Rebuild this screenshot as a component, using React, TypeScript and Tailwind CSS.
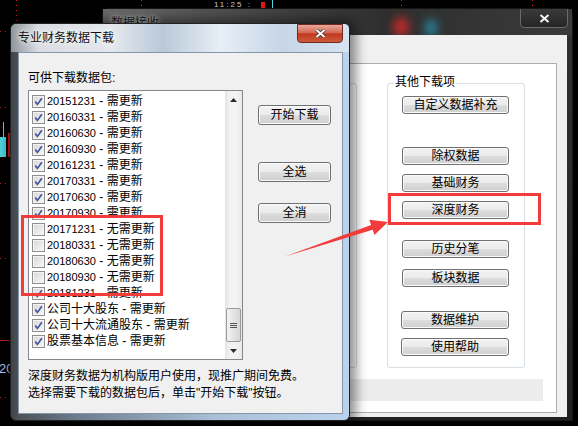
import React from "react";

type Row = { d: string; s: string; on: boolean };

const rows: Row[] = [
  { d: "20151231", s: "需更新", on: true },
  { d: "20160331", s: "需更新", on: true },
  { d: "20160630", s: "需更新", on: true },
  { d: "20160930", s: "需更新", on: true },
  { d: "20161231", s: "需更新", on: true },
  { d: "20170331", s: "需更新", on: true },
  { d: "20170630", s: "需更新", on: true },
  { d: "20170930", s: "需更新", on: true },
  { d: "20171231", s: "无需更新", on: false },
  { d: "20180331", s: "无需更新", on: false },
  { d: "20180630", s: "无需更新", on: false },
  { d: "20180930", s: "无需更新", on: false },
  { d: "20181231", s: "需更新", on: true },
  { d: "公司十大股东", s: "需更新", on: true },
  { d: "公司十大流通股东", s: "需更新", on: true },
  { d: "股票基本信息", s: "需更新", on: true },
];

const Check = ({ on }: { on: boolean }) => (
  <span className="w-[13px] h-[13px] shrink-0 border border-[#8f8f8f] bg-[linear-gradient(135deg,#d8d8d8,#f8f8f8)] shadow-[inset_0_0_0_1px_#f4f4f4] flex items-center justify-center">
    {on && (
      <svg width="9" height="9" viewBox="0 0 9 9">
        <path d="M1.2 4.6 L3.4 7.4 L7.9 1.2" fill="none" stroke="#3f58a8" strokeWidth="1.7" />
      </svg>
    )}
  </span>
);

const Btn = ({ label, className }: { label: string; className: string }) => (
  <div
    className={`rounded-[3px] border border-[#707070] bg-[linear-gradient(#f2f2f2_0%,#ebebeb_50%,#dddddd_50%,#cfcfcf_100%)] shadow-[inset_0_0_0_1px_#fafafa] flex items-center justify-center text-[12px] leading-[16px] text-black ${className}`}
  >
    {label}
  </div>
);

const CloseX = ({ color }: { color: string }) => (
  <svg width="11" height="9" viewBox="0 0 11 9">
    <path d="M1.5 1 L9.5 8 M9.5 1 L1.5 8" stroke="#333" strokeWidth="3.4" />
    <path d="M1.5 1 L9.5 8 M9.5 1 L1.5 8" stroke={color} strokeWidth="2" />
  </svg>
);

export default function App() {
  return (
    <div className="relative w-[578px] h-[426px] overflow-hidden bg-black font-['Liberation_Sans','Noto_Sans_CJK_SC',sans-serif] text-black">
      {/* chart behind the windows */}
      <svg className="absolute left-0 top-0" width="578" height="426">
        <g stroke="#d42020" strokeWidth="1" strokeDasharray="1 4">
          <line x1="16.5" y1="0" x2="16.5" y2="24" />
          <line x1="141.5" y1="0" x2="141.5" y2="10" />
          <line x1="401.5" y1="0" x2="401.5" y2="8" />
          <line x1="532.5" y1="0" x2="532.5" y2="8" />
          <line x1="0" y1="31.5" x2="12" y2="31.5" />
          <line x1="0" y1="107.5" x2="12" y2="107.5" />
          <line x1="0" y1="183.5" x2="12" y2="183.5" />
          <line x1="0" y1="258.5" x2="12" y2="258.5" />
          <line x1="0" y1="397.5" x2="12" y2="397.5" />
        </g>
        <line x1="0" y1="340.5" x2="12" y2="340.5" stroke="#c02020" />
        <line x1="3.5" y1="122" x2="3.5" y2="137" stroke="#4fd8e0" />
        <rect x="0" y="137" width="6" height="20" fill="#4fd8e0" />
        <rect x="8" y="133" width="2" height="24" fill="#c81818" />
        <rect x="261" y="2" width="4" height="6" fill="#e01818" />
        <line x1="272.5" y1="0" x2="272.5" y2="8" stroke="#4fd8e0" />
      </svg>
      <div className="absolute left-[214px] top-[1px] text-[8px] leading-[7px] text-[#c8c8c8] tracking-[2px]">11:25 :</div>
      <div className="absolute left-[-1px] top-[361px] text-[13px] leading-[16px] text-[#b8c8ff]">20</div>

      {/* back window: 数据接收 */}
      <div className="absolute left-[102px] top-[8px] w-[471px] h-[413px] rounded-t-[7px] border border-[#161616] bg-[linear-gradient(#555555,#303030_7%,#202020)] shadow-[inset_0_1px_0_#8a8a8a]">
        <div className="relative h-[26px] pl-[8px] pt-[1px] overflow-hidden bg-[linear-gradient(to_right,#6a6a6a,#4a4a4a_30%,#2e2e2e_60%,#3a3a3a)]">
          <span className="absolute left-[290px] top-[8px] w-[16px] h-[20px] rounded-full bg-[#b82a2a] blur-[5px]" />
          <span className="absolute left-[322px] top-[10px] w-[12px] h-[18px] rounded-full bg-[#2a7f95] blur-[5px]" />
          <span className="relative text-[12px] leading-[16px] text-[#1a1a1a] [text-shadow:0_0_6px_#d0d0d0,0_0_3px_#bcbcbc]">数据接收</span>
          <div className="absolute right-[4px] top-[-1px] w-[48px] h-[20px] rounded-b-[4px] border border-[#6a6a6a] bg-[linear-gradient(#3a3a3a,#262626)] flex items-center justify-center">
            <CloseX color="#f4f4f4" />
          </div>
        </div>
        <div className="ml-[6px] mr-[5px] h-[382px] bg-[#f0f0f0] pt-[28px] pl-[6px] pr-[10px]">
          <div className="h-[350px] border border-[#adadad] bg-white">
            <div className="flex gap-[30px] ml-[9px] mt-[19px]">
              <div className="w-[232px] h-[285px] rounded-[3px] border border-[#d5dfe5]" />
              <div className="relative w-[138px] h-[285px] rounded-[3px] border border-[#d5dfe5] flex flex-col pl-[14px] pt-[12px]">
                <span className="absolute left-[6px] top-[-10px] px-[1px] bg-white text-[12px] leading-[16px]">其他下载项</span>
                <Btn label="自定义数据补充" className="w-[107px] h-[18px]" />
                <Btn label="除权数据" className="w-[107px] h-[18px] mt-[33px]" />
                <Btn label="基础财务" className="w-[107px] h-[18px] mt-[9px]" />
                <Btn label="深度财务" className="w-[107px] h-[18px] mt-[9px]" />
                <Btn label="历史分笔" className="w-[107px] h-[18px] mt-[21px]" />
                <Btn label="板块数据" className="w-[107px] h-[18px] mt-[11px]" />
                <Btn label="数据维护" className="w-[108px] h-[18px] mt-[24px] ml-[-1px]" />
                <Btn label="使用帮助" className="w-[108px] h-[18px] mt-[9px] ml-[-1px]" />
              </div>
            </div>
            <div className="mt-[11px] mr-[13px] h-[22px] bg-[#ececec]" />
          </div>
        </div>
      </div>

      {/* front dialog: 专业财务数据下载 */}
      <div className="absolute left-[10px] top-[23px] w-[340px] h-[398px] rounded-[6px] border border-[#222] bg-[linear-gradient(to_right,#3e4247_0px,#4c5258_8px,#6d7d8e_20%,#a9bfd6_60%,#bad3ed_100%)] shadow-[2px_0_12px_4px_rgba(0,0,0,0.45)] flex flex-col">
        <div className="relative h-[28px] rounded-t-[5px] bg-[linear-gradient(to_right,#8e949b,#d9dde2_8%,#e4e8ec_30%,#b9c9d9_45%,#e8eef5_62%,#c6d6e8_80%,#d6e3f0)] pl-[7px] flex items-center">
          <span className="text-[12px] leading-[16px] text-[#111] [text-shadow:0_0_8px_#ffffff,0_0_4px_#ffffff]">专业财务数据下载</span>
          <div className="absolute right-[6px] top-[0px] w-[46px] h-[19px] rounded-b-[4px] border border-[#6c2a22] bg-[linear-gradient(#e8a899,#d36a55_45%,#c2391f_52%,#cf5a3c)] flex items-center justify-center">
            <CloseX color="#ffffff" />
          </div>
        </div>
        <div className="ml-[7px] mr-[6px] h-[362px] border border-[#8797a9] bg-[#f0f0f0] pl-[9px] pt-[17px]">
          <div className="text-[12px] leading-[16px]">可供下载数据包:</div>
          <div className="flex mt-[4px]">
            <div className="w-[215px] h-[270px] border border-[#828790] bg-white flex">
              <div className="flex-1 pl-[3px] pt-[2px]">
                {rows.map((r) => (
                  <div key={r.d} className="h-[16px] flex items-center gap-[2px] text-[12px] leading-[16px] whitespace-nowrap">
                    <Check on={r.on} />
                    <span>
                      <span className={/^\d+$/.test(r.d) ? "text-[11px]" : ""}>{r.d}</span> - {r.s}
                    </span>
                  </div>
                ))}
              </div>
              <div className="w-[17px] flex flex-col bg-[linear-gradient(to_right,#e4e4e4,#f3f3f3_30%,#f3f3f3_70%,#e8e8e8)]">
                <div className="h-[17px] flex items-center justify-center">
                  <svg width="7" height="4" viewBox="0 0 7 4">
                    <path d="M0 4 L3.5 0 L7 4 Z" fill="#2a2a2a" />
                  </svg>
                </div>
                <div className="h-[200px]" />
                <div className="h-[34px] mx-[1px] rounded-[2px] border border-[#9a9a9a] bg-[linear-gradient(to_right,#f4f4f4,#e4e4e4_50%,#d6d6d6)] flex flex-col items-center justify-center gap-[1px]">
                  <span className="w-[7px] h-[1px] bg-[#555]" />
                  <span className="w-[7px] h-[1px] bg-[#555]" />
                  <span className="w-[7px] h-[1px] bg-[#555]" />
                </div>
                <div className="flex-1" />
                <div className="h-[17px] flex items-center justify-center">
                  <svg width="7" height="4" viewBox="0 0 7 4">
                    <path d="M0 0 L3.5 4 L7 0 Z" fill="#2a2a2a" />
                  </svg>
                </div>
              </div>
            </div>
            <div className="ml-[15px] pt-[15px] flex flex-col">
              <Btn label="开始下载" className="w-[73px] h-[20px]" />
              <Btn label="全选" className="w-[73px] h-[20px] mt-[37px]" />
              <Btn label="全消" className="w-[73px] h-[20px] mt-[21px]" />
            </div>
          </div>
          <div className="mt-[8px] text-[12px] leading-[17px]">
            <div>深度财务数据为机构版用户使用，现推广期间免费。</div>
            <div>选择需要下载的数据包后，单击"开始下载"按钮。</div>
          </div>
        </div>
      </div>

      {/* red annotations */}
      <svg className="absolute left-0 top-0 pointer-events-none" width="578" height="426">
        <rect x="22.5" y="216.5" width="139" height="78" fill="none" stroke="#f23b3b" strokeWidth="3" />
        <rect x="389.5" y="194.5" width="150" height="29" fill="none" stroke="#f23b3b" strokeWidth="3" />
        <polygon
          points="285,256.5 371.1,224.9 369.4,219.7 388,222 374.4,234.9 372.7,229.7"
          fill="#f23b3b"
        />
      </svg>
    </div>
  );
}
